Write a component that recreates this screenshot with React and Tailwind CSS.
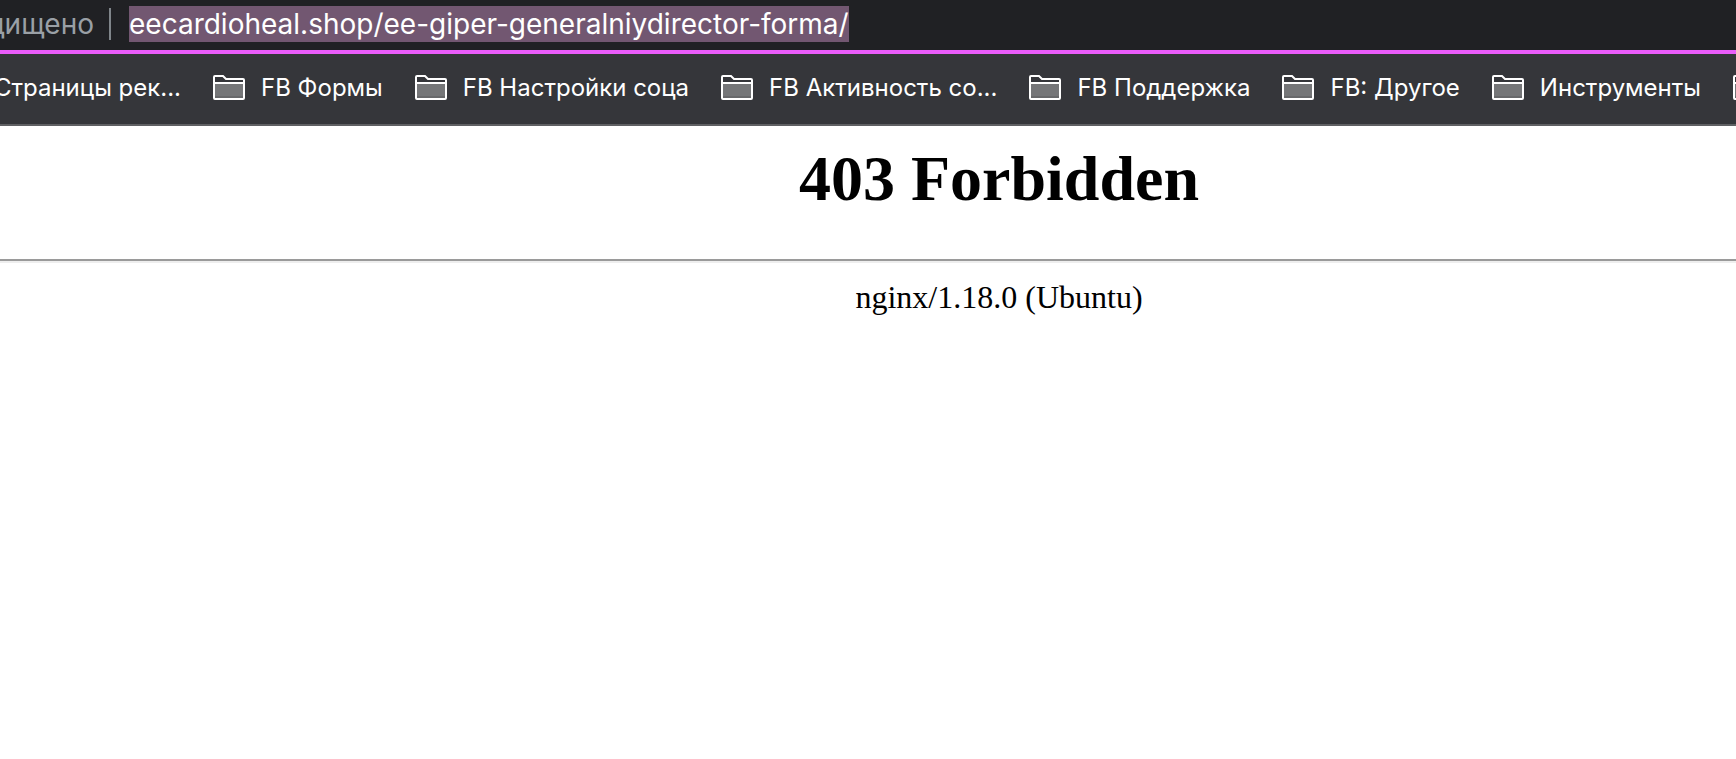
import { useState } from 'react'

const FOLDERS = ['FB Формы', 'FB Настройки соца', 'FB Активность со...', 'FB Поддержка', 'FB: Другое', 'Инструменты']

function FolderIcon() {
  return (
    <svg viewBox="0 0 32 27" fill="none" className="w-8 h-[27px] shrink-0" aria-hidden="true">
      <rect x="2" y="8" width="28" height="15" fill="#757678" />
      <rect x="2" y="21" width="28" height="2" fill="#68696b" />
      <path d="M1 23V2Q1 1 2 1H10L13 4H30Q31 4 31 5V23Q31 24 30 24H2Q1 24 1 23ZM1 8H31" stroke="white" strokeWidth="2" />
    </svg>
  )
}

function AddressBar() {
  const [url, setUrl] = useState('eecardioheal.shop/ee-giper-generalniydirector-forma/')

  return (
    <div className="h-[50px] pb-0.5 bg-[#202124] flex items-center">
      <label htmlFor="url" className="w-[94px] shrink-0 flex justify-end overflow-hidden whitespace-nowrap text-[28px] leading-9 text-[#9aa0a6]">
        Не защищено
      </label>
      <div className="w-0.5 h-8 ml-[15px] mr-[18px] shrink-0 bg-[#80868b]" />
      <input
        id="url"
        type="text"
        value={url}
        onChange={(e) => setUrl(e.target.value)}
        className="field-sizing-content h-9 bg-[#725771] text-white text-[28px] leading-9 outline-none"
      />
    </div>
  )
}

function BookmarksBar() {
  return (
    <nav className="h-[76px] pb-0.5 border-t-4 border-t-[#ea5cfa] border-b-2 border-b-[#5f6063] bg-[#35363a] flex items-center gap-8 overflow-hidden text-2xl leading-8 text-white whitespace-nowrap">
      <a href="#" className="w-[181px] shrink-0 flex justify-end overflow-hidden">Страницы рек...</a>
      {FOLDERS.map(name => (
        <button key={name} type="button" className="shrink-0 flex items-center gap-4">
          <FolderIcon />
          {name}
        </button>
      ))}
      <button type="button" className="shrink-0">
        <FolderIcon />
      </button>
    </nav>
  )
}

export default function App() {
  return (
    <div className="min-h-screen bg-white font-[Inter,sans-serif] overflow-hidden">
      <AddressBar />
      <BookmarksBar />
      <main className="pl-[262px] pt-4 text-center text-black font-['Liberation_Serif',serif]">
        <h1 className="text-[64px] leading-[74px] font-bold">403 Forbidden</h1>
        <hr className="-ml-[262px] mt-[43px] border-t-2 border-b-2 border-t-[#9a9a9a] border-b-[#eeeeee]" />
        <p className="mt-4 text-[32px] leading-9">nginx/1.18.0 (Ubuntu)</p>
      </main>
    </div>
  )
}
